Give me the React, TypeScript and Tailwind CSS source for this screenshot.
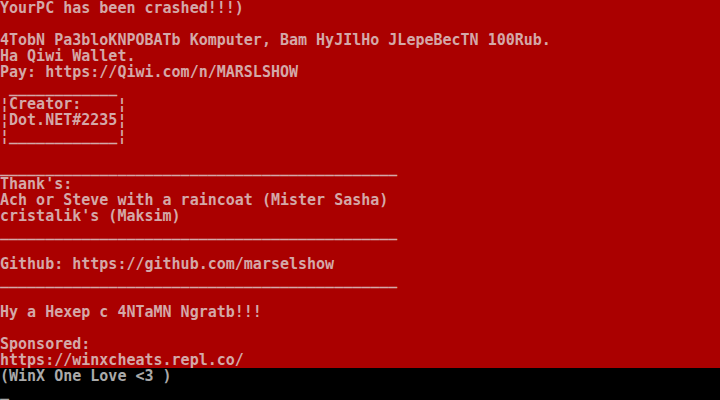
import React from 'react';

const redLines = [
  'YourPC has been crashed!!!)',
  '',
  '4TobN Pa3bloKNPOBATb Komputer, Bam HyJIlHo JLepeBecTN 100Rub.',
  'Ha Qiwi Wallet.',
  'Pay: https://Qiwi.com/n/MARSLSHOW',
  ' ____________',
  '¦Creator:    ¦',
  '¦Dot.NET#2235¦',
  '¦____________¦',
  '',
  '____________________________________________',
  "Thank's:",
  'Ach or Steve with a raincoat (Mister Sasha)',
  "cristalik's (Maksim)",
  '____________________________________________',
  '',
  'Github: https://github.com/marselshow',
  '____________________________________________',
  '',
  'Hy a Hexep c 4NTaMN Ngratb!!!',
  '',
  'Sponsored:',
  'https://winxcheats.repl.co/',
];

const blackLines = ['(WinX One Love <3 )', '_'];

const App = () => {
  return (
    <div className="w-[720px] h-[400px] flex flex-col overflow-hidden font-['DejaVu_Sans_Mono',monospace] font-bold text-[15px] leading-[16px]">
      {/* Red console area */}
      <div className="h-[368px] bg-[#aa0000] text-[#d4a8a8]">
        {redLines.map((line, i) => (
          <div key={i} className="h-4 whitespace-pre">{line}</div>
        ))}
      </div>

      {/* Black prompt area */}
      <div className="flex-1 bg-black text-[#aaaaaa]">
        {blackLines.map((line, i) => (
          <div key={i} className="h-4 whitespace-pre">{line}</div>
        ))}
      </div>
    </div>
  );
};

export default App;
